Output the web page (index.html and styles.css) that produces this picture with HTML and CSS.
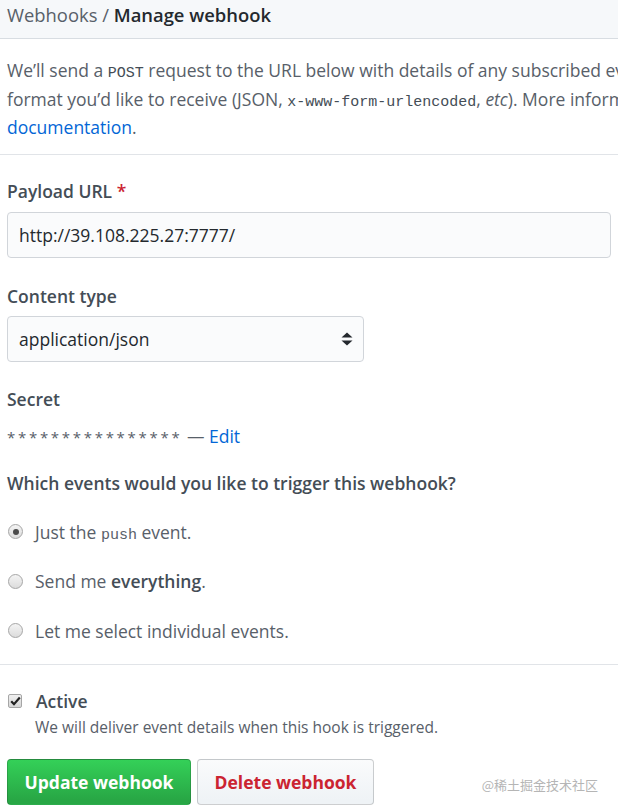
FILE: index.html
```html
<!DOCTYPE html>
<html lang="en">
<head>
<meta charset="utf-8">
<title>Manage webhook</title>
<link rel="stylesheet" href="styles.css">
</head>
<body>
<div class="header"><span class="crumb">Webhooks</span> / <strong class="title">Manage webhook</strong></div>

<p class="intro">We’ll send a <code class="code-caps">POST</code> request to the URL below with details of any subscribed events. You can also specify which data<br>format you’d like to receive (JSON, <code>x-www-form-urlencoded</code>, <em>etc</em>). More information can be found in our developer<br><a class="link" href="#">documentation</a>.</p>

<div class="section">
  <div class="field">
    <div class="label">Payload URL <span class="req">*</span></div>
    <input class="input" type="text" value="http://39.108.225.27:7777/" readonly>
  </div>
  <div class="field field-ct">
    <div class="label">Content type</div>
    <div class="select">
      <span>application/json</span>
      <svg class="select-arrow" width="12" height="16" viewBox="0 0 12 16"><path d="M6 1.5 L11.5 6.5 H0.5 Z M6 14.5 L0.5 9.5 H11.5 Z" fill="#24292e"/></svg>
    </div>
  </div>
  <div class="field field-secret">
    <div class="label">Secret</div>
    <div class="secret"><span class="stars">****************</span> — <a class="link" href="#">Edit</a></div>
  </div>
  <div class="field field-events">
    <div class="label">Which events would you like to trigger this webhook?</div>
    <div class="radio-list">
      <div class="radio-row"><span class="radio checked"></span><span>Just the <code class="code-push">push</code> event.</span></div>
      <div class="radio-row"><span class="radio"></span><span>Send me <strong class="em">everything</strong>.</span></div>
      <div class="radio-row"><span class="radio"></span><span>Let me select individual events.</span></div>
    </div>
  </div>
</div>

<div class="section-bottom">
  <div class="active-row">
    <span class="checkbox"><svg width="11" height="10" viewBox="0 0 11 10"><path d="M1.2 5.2 L4 8.2 L9.8 1.5" fill="none" stroke="#222" stroke-width="2.2"/></svg></span>
    <span class="active-label">Active</span>
  </div>
  <div class="note">We will deliver event details when this hook is triggered.</div>
  <div class="buttons">
    <button class="btn btn-primary" type="button">Update webhook</button>
    <button class="btn btn-danger" type="button">Delete webhook</button>
  </div>
</div>

<div class="watermark">@稀土掘金技术社区</div>
</body>
</html>
```

FILE: styles.css
```css
html, body {
  margin: 0;
  padding: 0;
}
body {
  width: 618px;
  height: 812px;
  overflow: hidden;
  position: relative;
  font-family: "Open Sans", "Noto Sans", sans-serif;
  font-size: 17.5px;
  color: #586069;
  background: #fff;
}

.header {
  height: 39px;
  box-sizing: border-box;
  background: #f6f8fa;
  border-bottom: 1px solid #d8dde2;
  padding: 0 7px;
  line-height: 30px;
  font-size: 18.4px;
  white-space: nowrap;
  color: #586069;
}
.title {
  color: #24292e;
  font-weight: 600;
}

.intro {
  margin: 17px 0 0;
  padding: 0 7px 12px;
  line-height: 28.5px;
  white-space: nowrap;
  border-bottom: 1px solid #e1e4e8;
}
code {
  font-family: "Liberation Mono", "DejaVu Sans Mono", monospace;
  font-size: 15px;
  line-height: 1;
  color: #444d56;
}
.link {
  color: #0366d6;
  text-decoration: none;
}

.section {
  padding: 0 7px 19px;
  border-bottom: 1px solid #e1e4e8;
}
.field {
  margin-top: 22px;
}
.field-ct { margin-top: 24px; }
.field-secret { margin-top: 23px; }
.field-events { margin-top: 19px; }

.label {
  line-height: 28px;
  font-weight: 600;
  color: #444d56;
}
.req {
  color: #cb2431;
}
.input {
  display: block;
  margin-top: 7px;
  width: 604px;
  height: 46px;
  box-sizing: border-box;
  border: 1px solid #d1d5da;
  border-radius: 4px;
  background: #fafbfc;
  padding: 0 11px;
  font-family: "Open Sans", "Noto Sans", sans-serif;
  font-size: 17.5px;
  color: #24292e;
  outline: none;
}
.select {
  margin-top: 6px;
  width: 357px;
  height: 46px;
  box-sizing: border-box;
  border: 1px solid #d1d5da;
  border-radius: 4px;
  background: #fafbfc;
  padding: 0 11px;
  display: flex;
  align-items: center;
  justify-content: space-between;
  color: #24292e;
}
.select-arrow {
  margin-right: -1px;
}

.secret {
  margin-top: 9px;
  line-height: 28px;
  white-space: nowrap;
}
.stars {
  letter-spacing: 2.7px;
  font-size: 15px;
  line-height: 1;
}

.radio-list {
  margin-top: 21px;
  display: flex;
  flex-direction: column;
  gap: 21.5px;
}
.radio-row {
  display: flex;
  align-items: center;
  gap: 12px;
  height: 28px;
  line-height: 28px;
}
.radio {
  width: 15px;
  height: 15px;
  box-sizing: border-box;
  margin-left: 1px;
  border-radius: 50%;
  border: 1px solid #a6a6a6;
  background: linear-gradient(#f4f4f4, #dcdcdc);
  display: flex;
  align-items: center;
  justify-content: center;
}
.radio.checked::after {
  content: "";
  width: 6px;
  height: 6px;
  border-radius: 50%;
  background: #4a4a4a;
}
.code-push {
  font-size: 15px;
  color: #586069;
}
.em {
  font-weight: 600;
  color: #444d56;
}

.section-bottom {
  padding: 22px 7px 0;
}
.active-row {
  display: flex;
  align-items: center;
  gap: 14px;
  height: 28px;
  line-height: 28px;
}
.checkbox {
  width: 14px;
  height: 14px;
  box-sizing: border-box;
  margin-left: 1px;
  border: 1px solid #a6a6a6;
  border-radius: 2px;
  background: linear-gradient(#f0f0f0, #d6d6d6);
  display: flex;
  align-items: center;
  justify-content: center;
}
.active-label {
  font-weight: 600;
  color: #444d56;
}
.note {
  margin-left: 28px;
  font-size: 15.5px;
  line-height: 24px;
  color: #586069;
}
.buttons {
  margin-top: 20px;
  display: flex;
  gap: 6px;
}
.btn {
  height: 46px;
  box-sizing: border-box;
  border: 1px solid rgba(27, 31, 35, 0.2);
  border-radius: 4px;
  padding: 0;
  white-space: nowrap;
  font-family: "Open Sans", "Noto Sans", sans-serif;
  font-size: 17.5px;
  font-weight: 700;
  cursor: pointer;
}
.btn-primary {
  width: 184px;
  color: #fff;
  background: linear-gradient(#34d058, #28a745 90%);
}
.btn-danger {
  width: 177px;
  color: #cb2431;
  background: linear-gradient(#fafbfc, #eff3f6 90%);
}

.watermark {
  position: absolute;
  right: 20px;
  top: 775px;
  font-family: "Noto Sans CJK SC", sans-serif;
  font-size: 13px;
  line-height: 20px;
  color: #b5b5b5;
}
```
